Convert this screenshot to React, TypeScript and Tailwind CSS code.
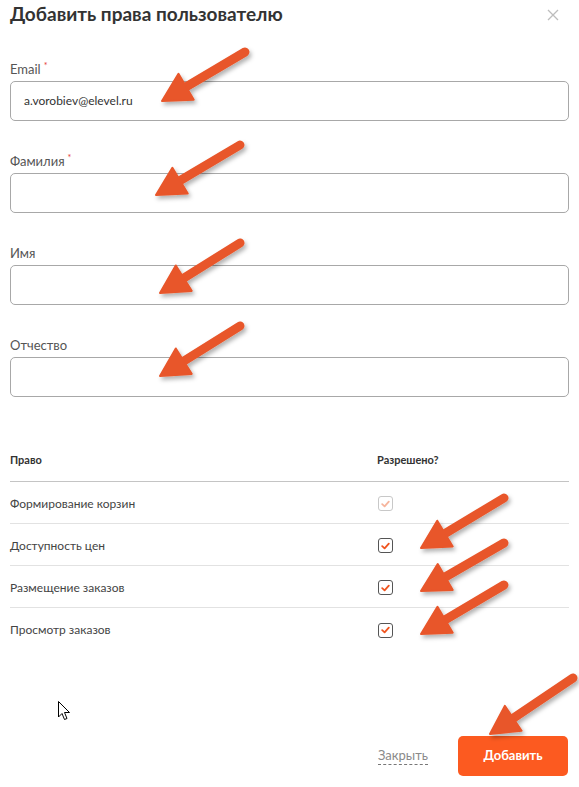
import React from "react";

type Pt = [number, number];

const arrows: Array<[Pt, Pt]> = [
  [[245, 52], [162, 101]],
  [[240, 145], [156, 195]],
  [[240, 243], [160, 293]],
  [[240, 326], [160, 376]],
  [[504, 498], [421, 548]],
  [[504, 543], [421, 591]],
  [[504, 585], [421, 634]],
  [[573, 678], [490, 734]],
];

function Arrow({ from, to }: { from: Pt; to: Pt }) {
  const [x1, y1] = from;
  const [x2, y2] = to;
  const dx = x2 - x1;
  const dy = y2 - y1;
  const len = Math.hypot(dx, dy);
  const ux = dx / len;
  const uy = dy / len;
  const h = 28;
  const w = 15;
  const bx = x2 - ux * h;
  const by = y2 - uy * h;
  const px = -uy;
  const py = ux;
  const head = `${x2},${y2} ${bx + px * w},${by + py * w} ${bx - px * w},${by - py * w}`;
  return (
    <g>
      <line x1={x1} y1={y1} x2={bx + ux * 4} y2={by + uy * 4} stroke="#e8562a" strokeWidth={9} strokeLinecap="round" />
      <polygon points={head} fill="#e8562a" stroke="#e8562a" strokeWidth={2} strokeLinejoin="round" />
    </g>
  );
}

function Label({ text, required }: { text: string; required?: boolean }) {
  return (
    <div className="flex h-[16px] items-center text-[13px] leading-[16px] text-[#555]">
      {text}
      {required && <span className="ml-[3px] -mt-[7px] text-[9px] leading-none text-[#e53935]">*</span>}
    </div>
  );
}

function Field({ label, required, value }: { label: string; required?: boolean; value?: string }) {
  return (
    <div className="flex flex-col gap-[4px]">
      <Label text={label} required={required} />
      <div className="flex h-[40px] items-center rounded-[5px] border border-[#a8a8a8] px-[13px] text-[12px] text-[#333]">
        {value}
      </div>
    </div>
  );
}

function Check({ disabled }: { disabled?: boolean }) {
  return (
    <div
      className={
        disabled
          ? "flex h-[15px] w-[15px] items-center justify-center rounded-[3px] border border-[#c8c8c8]"
          : "flex h-[15px] w-[15px] items-center justify-center rounded-[3px] border border-[#555]"
      }
    >
      <svg width="9" height="8" viewBox="0 0 9 8">
        <path
          d="M1.2 4.2 L3.6 6.4 L7.8 1.6"
          fill="none"
          stroke={disabled ? "#f6b59d" : "#f0541e"}
          strokeWidth="1.8"
          strokeLinecap="round"
          strokeLinejoin="round"
        />
      </svg>
    </div>
  );
}

const rights = [
  { name: "Формирование корзин", disabled: true },
  { name: "Доступность цен" },
  { name: "Размещение заказов" },
  { name: "Просмотр заказов" },
];

export default function App() {
  return (
    <div
      className="relative h-[787px] w-[579px] overflow-hidden bg-white px-[10px]"
      style={{ fontFamily: 'Lato, "Noto Sans", sans-serif' }}
    >
      <div className="flex h-[30px] items-center justify-between">
        <h1 className="-mt-[3px] text-[19px] font-bold leading-none text-[#333]">Добавить права пользователю</h1>
        <svg width="12" height="12" viewBox="0 0 12 12" className="mr-[10px]">
          <path d="M1 1 L11 11 M11 1 L1 11" stroke="#bdbdbd" strokeWidth="1.3" />
        </svg>
      </div>

      <div className="mt-[31px] flex flex-col gap-[32px]">
        <Field label="Email" required value="a.vorobiev@elevel.ru" />
        <Field label="Фамилия" required />
        <Field label="Имя" />
        <Field label="Отчество" />
      </div>

      <div className="mt-[43px]">
        <div className="flex h-[42px] items-center border-b border-[#c4c4c4] text-[11px] font-bold text-[#333]">
          <div className="w-[367px]">Право</div>
          <div>Разрешено?</div>
        </div>
        {rights.map((r, i) => (
          <div
            key={r.name}
            className={
              i < rights.length - 1
                ? "flex h-[42px] items-center border-b border-[#e2e2e2] pt-[2px] text-[12px] text-[#444]"
                : "flex h-[42px] items-center pt-[2px] text-[12px] text-[#444]"
            }
          >
            <div className="w-[368px]">{r.name}</div>
            <Check disabled={r.disabled} />
          </div>
        ))}
      </div>

      <div className="mt-[86px] flex items-center justify-end gap-[30px] pr-[1px]">
        <span className="border-b border-dashed border-[#777] pb-[1px] text-[13px] leading-[16px] text-[#8a8a8a]">
          Закрыть
        </span>
        <button className="h-[40px] w-[110px] rounded-[5px] bg-[#fc5a20] text-[13px] font-bold text-white">
          Добавить
        </button>
      </div>

      <svg className="pointer-events-none absolute left-0 top-0" width="579" height="787">
        <defs>
          <filter id="sh" x="-20%" y="-20%" width="140%" height="140%">
            <feDropShadow dx="2" dy="3" stdDeviation="2" floodColor="#000" floodOpacity="0.3" />
          </filter>
        </defs>
        <g filter="url(#sh)">
          {arrows.map(([a, b], i) => (
            <Arrow key={i} from={a} to={b} />
          ))}
        </g>
        <path
          d="M58.5 701.5 L58.5 717 L62 713.5 L64.5 719.5 L67 718.5 L64.5 712.5 L69.5 712.5 Z"
          fill="#fff"
          stroke="#000"
          strokeWidth="1"
          strokeLinejoin="round"
        />
      </svg>
    </div>
  );
}
